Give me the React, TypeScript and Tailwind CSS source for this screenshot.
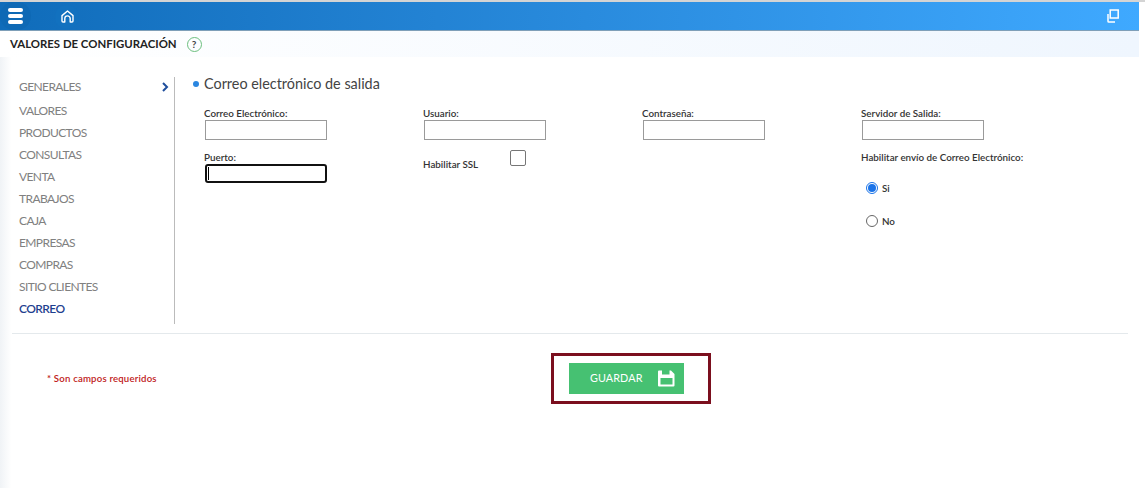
const MENU = ['GENERALES', 'VALORES', 'PRODUCTOS', 'CONSULTAS', 'VENTA', 'TRABAJOS', 'CAJA', 'EMPRESAS', 'COMPRAS', 'SITIO CLIENTES']

function Field({ label, focused, className }: { label: string; focused?: boolean; className?: string }) {
  return (
    <div className={className}>
      <div className="-ml-px h-[14px] text-[9.8px] leading-[14px] font-semibold text-[#333]">{label}</div>
      {focused ? (
        <div className="flex h-[19px] w-[122px] items-center rounded-[3px] border-2 border-[#111] pl-[1px]">
          <div className="h-[13px] w-px bg-black" />
        </div>
      ) : (
        <div className="h-[20px] w-[122px] border border-[#9a9a9a] bg-white" />
      )}
    </div>
  )
}

function Radio({ label, checked }: { label: string; checked?: boolean }) {
  return (
    <div className="flex items-center gap-[4px]">
      {checked ? (
        <div className="flex h-[12px] w-[12px] items-center justify-center rounded-full border border-[#1a73e8]">
          <div className="h-[8px] w-[8px] rounded-full bg-[#1a73e8]" />
        </div>
      ) : (
        <div className="h-[12px] w-[12px] rounded-full border border-[#666]" />
      )}
      <span className="text-[9.8px] font-semibold text-[#333]">{label}</span>
    </div>
  )
}

export default function App() {
  return (
    <div className="h-[488px] w-[1145px] overflow-hidden bg-white font-['Lato',sans-serif]">
      <div className="h-[2px] bg-[#d4d4d4]" />
      <div className="mr-[6px] bg-gradient-to-r from-[#f0f3f6] from-0% via-white via-[1%] to-white">
        <div className="flex h-[29px] items-center border-b border-[#7f9fb8] bg-gradient-to-r from-[#0f6cba] to-[#3fa9ff] pr-[20px] text-white">
          <div className="flex h-[28px] w-[31px] items-center justify-center rounded-full bg-[#0e69b5]">
            <div className="flex h-[16px] w-[15px] flex-col justify-between">
              <div className="h-[4px] rounded-full bg-white" />
              <div className="h-[4px] rounded-full bg-white" />
              <div className="h-[4px] rounded-full bg-white" />
            </div>
          </div>
          <div className="mt-[1px] ml-[24px] flex h-[24px] w-[24px] items-center justify-center rounded-full bg-[#1271bf]">
            <svg width="13" height="13" viewBox="0 0 13 13" fill="none" stroke="white" strokeWidth="1.4" strokeLinejoin="round">
              <path d="M1 5.6L6.5 1L12 5.6V11a1 1 0 0 1-1 1H9.2V8.6a2.7 2.7 0 0 0-5.4 0V12H2a1 1 0 0 1-1-1z" />
            </svg>
          </div>
          <svg width="13" height="14" viewBox="0 0 13 14" fill="none" stroke="white" strokeWidth="1.5" className="ml-auto">
            <rect x="4.2" y="1" width="8" height="8" />
            <path d="M2 5v7.2a.8.8 0 0 0 .8.8H9" />
          </svg>
        </div>
        <div className="flex h-[26px] items-center bg-gradient-to-r from-white to-[#eff6fe] pl-[10px]">
          <span className="text-[11.4px] font-bold text-[#222]">VALORES DE CONFIGURACIÓN</span>
          <div className="ml-[10px] flex h-[15px] w-[15px] items-center justify-center rounded-full border border-[#6cbf7e] text-[10px] font-bold text-[#444]">?</div>
        </div>
        <div className="h-[431px] pr-[11px] pl-[12px]">
          <div className="flex h-[277px] border-b border-[#e4e9ec] pt-[20px]">
            <div className="h-[247px] w-[163px] border-r border-[#bbb]">
              <div className="flex h-[19px] items-center justify-between pr-[5px] pl-[7px] text-[12px] text-[#808080]">
                <span className="tracking-[-0.6px]">{MENU[0]}</span>
                <svg width="8" height="10" viewBox="0 0 8 10" fill="none" stroke="#1f4e9c" strokeWidth="2">
                  <path d="M2 1l4 4-4 4" />
                </svg>
              </div>
              <div className="mt-[4px] flex flex-col pl-[7px] text-[12px] tracking-[-0.6px] text-[#808080]">
                {MENU.slice(1).map(item => (
                  <div key={item} className="flex h-[22px] items-center">{item}</div>
                ))}
                <div className="flex h-[22px] items-center font-semibold text-[#1f3f8f]">CORREO</div>
              </div>
            </div>
            <div className="flex-1 pl-[18px]">
              <div className="-mt-[1px] flex h-[16px] items-center">
                <div className="h-[6px] w-[6px] rounded-full bg-[#2a86e0]" />
                <span className="ml-[5px] text-[14.4px] text-[#444]">Correo electrónico de salida</span>
              </div>
              <div className="mt-[14px] ml-[12px] flex">
                <div className="w-[219px]">
                  <Field label="Correo Electrónico:" />
                  <Field label="Puerto:" focused className="mt-[10px]" />
                </div>
                <div className="w-[219px]">
                  <Field label="Usuario:" />
                  <div className="mt-[10px] flex w-[102px] items-start justify-between">
                    <span className="-ml-px mt-[7px] text-[9.8px] leading-[14px] font-semibold text-[#333]">Habilitar SSL</span>
                    <div className="h-[16px] w-[16px] rounded-[2px] border border-[#767676] bg-white" />
                  </div>
                </div>
                <div className="w-[219px]">
                  <Field label="Contraseña:" />
                </div>
                <div className="-ml-px">
                  <Field label="Servidor de Salida:" className="ml-px" />
                  <div className="mt-[10px] h-[14px] text-[9.8px] leading-[14px] font-semibold text-[#333]">Habilitar envío de Correo Electrónico:</div>
                  <div className="mt-[17px] ml-[5px] flex flex-col gap-[18px]">
                    <Radio label="Si" checked />
                    <Radio label="No" />
                  </div>
                </div>
              </div>
            </div>
          </div>
          <div className="flex h-[89px] items-center">
            <span className="mt-[1px] ml-[35px] w-[504px] text-[9.6px] font-semibold tracking-[0.2px] text-[#c02020]">* Son campos requeridos</span>
            <div className="border-[3px] border-[#7b0f1e] py-[7px] pr-[24px] pl-[15px]">
              <div className="flex h-[31px] w-[115px] items-center bg-[#46c172] pr-[9px] pl-[21px] text-white">
                <span className="text-[10.8px] tracking-[0.1px]">GUARDAR</span>
                <svg width="17" height="17" viewBox="0 0 17 17" className="ml-auto" fill="white" fillRule="evenodd">
                  <path d="M1 0.5h12l3.5 3.5v11.5a1 1 0 0 1-1 1H1a1 1 0 0 1-1-1V1.5a1 1 0 0 1 1-1zM4 0.5v4h7.5v-4zM2.5 8v6.5h12V8z" />
                </svg>
              </div>
            </div>
          </div>
        </div>
      </div>
    </div>
  )
}
